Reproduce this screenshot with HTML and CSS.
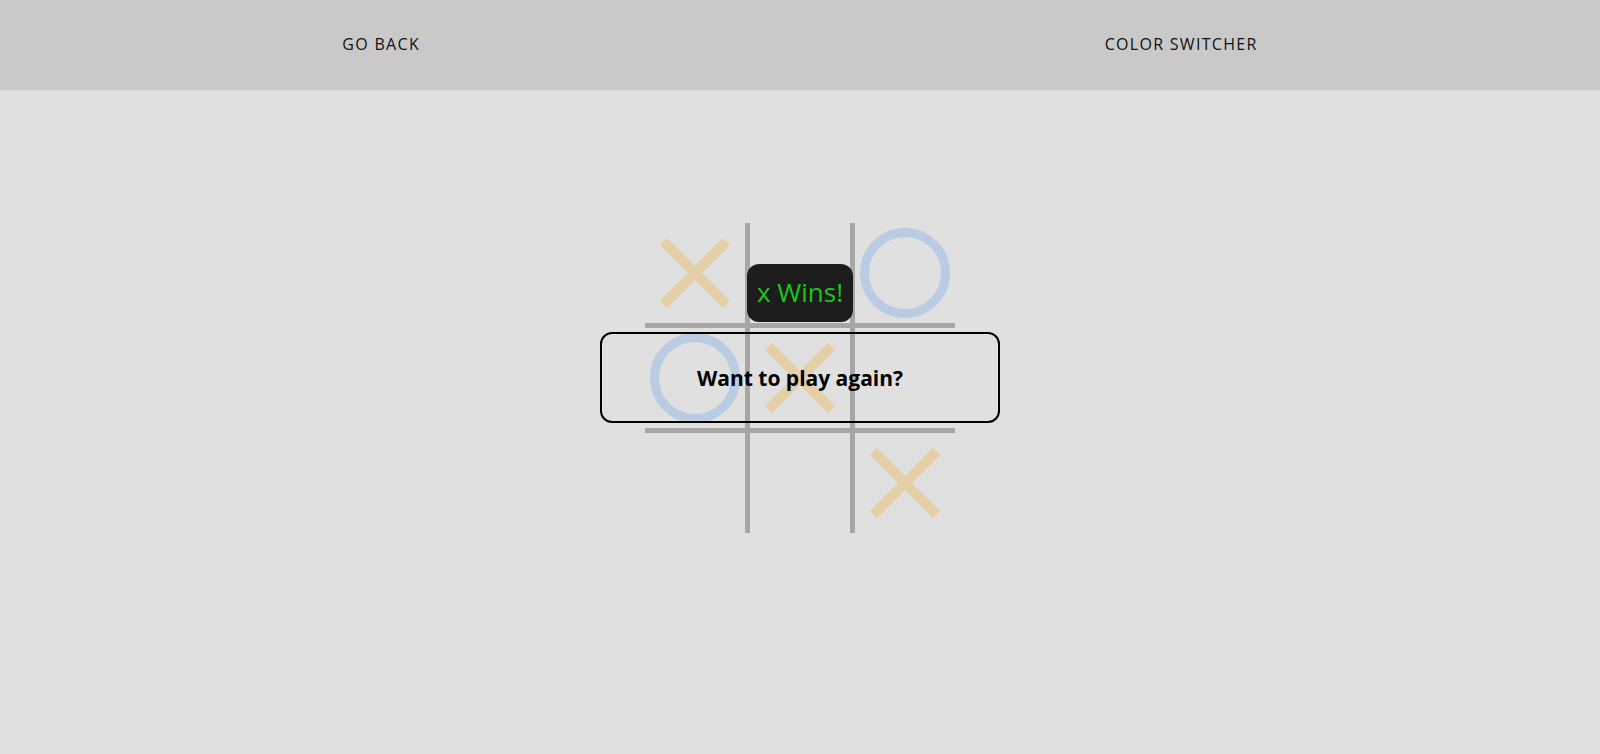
FILE: index.html
```html
<!DOCTYPE html>
<html lang="en">
<head>
<meta charset="utf-8">
<title>Tic Tac Toe</title>
<link rel="stylesheet" href="styles.css">
</head>
<body>
<header class="topbar">
  <a class="nav-link" href="#">GO BACK</a>
  <a class="nav-link" href="#">COLOR SWITCHER</a>
</header>
<main class="main">
  <div class="game">
    <div class="board">
      <div class="cell"><svg class="mark-x" viewBox="0 0 70 70"><path d="M3.5 3.5 L66.5 66.5 M66.5 3.5 L3.5 66.5"/></svg></div>
      <div class="cell"></div>
      <div class="cell"><span class="mark-o"></span></div>
      <div class="cell"><span class="mark-o"></span></div>
      <div class="cell"><svg class="mark-x" viewBox="0 0 70 70"><path d="M3.5 3.5 L66.5 66.5 M66.5 3.5 L3.5 66.5"/></svg></div>
      <div class="cell"></div>
      <div class="cell"></div>
      <div class="cell"></div>
      <div class="cell"><svg class="mark-x" viewBox="0 0 70 70"><path d="M3.5 3.5 L66.5 66.5 M66.5 3.5 L3.5 66.5"/></svg></div>
    </div>
    <div class="result">x Wins!</div>
    <button class="again">Want to play again?</button>
  </div>
</main>
</body>
</html>
```
FILE: styles.css
```css
* { box-sizing: border-box; }
html, body { margin: 0; padding: 0; }
body {
  background: #e0e0e0;
  font-family: "Open Sans", "Liberation Sans", sans-serif;
  color: #000;
  height: 754px;
  overflow: hidden;
}
.topbar {
  height: 90px;
  background: #c9c9c9;
  display: flex;
  justify-content: space-around;
  align-items: center;
}
.nav-link {
  color: #111;
  text-decoration: none;
  font-size: 16px;
  line-height: 20px;
  letter-spacing: 1.3px;
  font-weight: 400;
  padding-bottom: 3px;
}
.main {
  display: flex;
  justify-content: center;
  padding-top: 133px;
}
.game {
  position: relative;
  width: 310px;
  height: 310px;
}
.board {
  display: grid;
  grid-template-columns: repeat(3, 100px);
  grid-template-rows: repeat(3, 100px);
  gap: 5px;
  background: #a6a6a6;
  width: 310px;
  height: 310px;
}
.cell {
  background: #e0e0e0;
  display: flex;
  align-items: center;
  justify-content: center;
}
.mark-x {
  width: 70px;
  height: 70px;
}
.mark-x path {
  stroke: #e4cfa6;
  stroke-width: 10;
  fill: none;
}
.mark-o {
  width: 90px;
  height: 90px;
  border-radius: 50%;
  border: 9px solid #b9cce4;
}
.result {
  position: absolute;
  left: 102px;
  top: 41px;
  width: 106px;
  height: 58px;
  background: #1c1c1c;
  border-radius: 12px;
  color: #19c819;
  font-size: 26px;
  line-height: 30px;
  padding-bottom: 3px;
  display: flex;
  align-items: center;
  justify-content: center;
}
.again {
  position: absolute;
  left: -45px;
  top: 109px;
  width: 400px;
  height: 91px;
  background: transparent;
  border: 2px solid #000;
  border-radius: 12px;
  font-family: inherit;
  font-size: 21px;
  font-weight: 700;
  color: #000;
  cursor: pointer;
}
```
